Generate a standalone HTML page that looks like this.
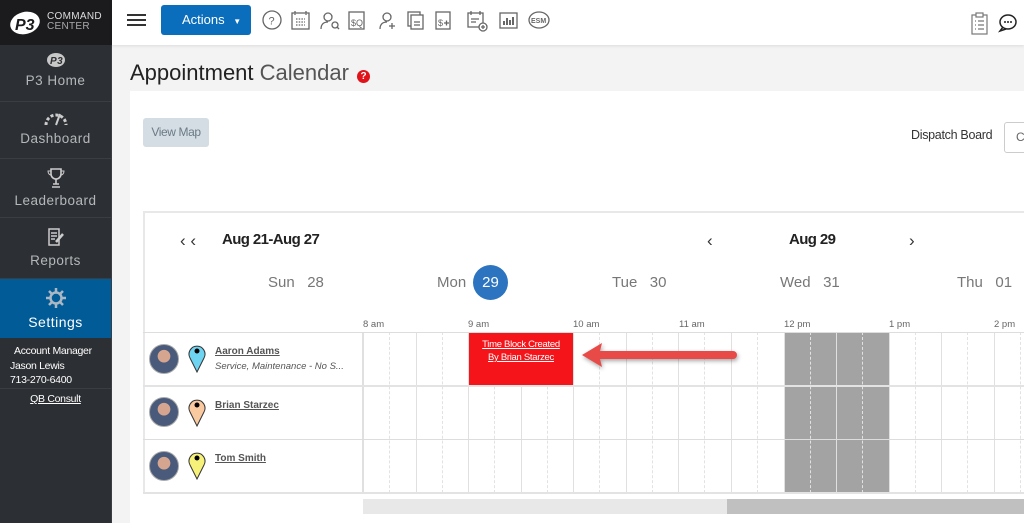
<!DOCTYPE html>
<html><head><meta charset="utf-8"><style>
*{margin:0;padding:0;box-sizing:border-box}
body{width:1024px;height:523px;overflow:hidden;position:relative;background:#f3f3f3;font-family:"Liberation Sans",sans-serif}
.a{position:absolute}
.sb{left:0;top:0;width:112px;height:523px;background:#2c2f33;border-right:1px solid #3a3d41}
.logo{left:0;top:0;width:112px;height:45px;background:#1b1b1d}
.nav{left:0;width:111px;color:#b5b7ba;font-size:13.5px;text-align:center;border-bottom:1px solid #3a3d42;letter-spacing:.5px}
.top{left:112px;top:0;width:912px;height:45px;background:#fff;box-shadow:0 1px 3px rgba(0,0,0,.1)}
.ic{stroke:#666;fill:none;stroke-width:1.3}
.vl{top:332px;height:161px;width:0;border-left:1px solid #e0e0e0}
.vd{top:332px;height:161px;width:0;border-left:1px dashed #e2e2e2}
.name{font-size:10px;color:#555;text-decoration:underline;font-weight:bold}
.hr{font-size:9.5px;color:#666;top:319px}
.day{font-size:15px;color:#777;top:274px}
</style></head><body>
<div class="a sb"></div>
<div class="a logo">
<svg class="a" style="left:8px;top:9px" width="36" height="28" viewBox="0 0 36 28"><ellipse cx="17" cy="14" rx="15" ry="11" fill="#fff" transform="rotate(-15 17 14)"/><text x="7" y="21" font-size="16" font-weight="bold" font-style="italic" fill="#1b1b1d" font-family="Liberation Sans">P3</text></svg>
<div class="a" style="left:47px;top:12px;color:#ddd;font-size:10px;line-height:10px;letter-spacing:.3px">COMMAND<br><span style="color:#aaa">CENTER</span></div>
</div>
<div class="a nav" style="top:45px;height:57px"><svg style="margin-top:7px" width="20" height="16" viewBox="0 0 20 16"><ellipse cx="10" cy="8" rx="9" ry="7" fill="#c8c8c8"/><text x="4" y="12" font-size="10" font-weight="bold" font-style="italic" fill="#2c2f33">P3</text></svg><div style="margin-top:2px">P3 Home</div></div>
<div class="a nav" style="top:102px;height:57px"><svg style="margin-top:8px" width="26" height="16" viewBox="0 0 26 16"><path d="M3 15 A10 10 0 0 1 23 15" stroke="#ccc" stroke-width="3" fill="none" stroke-dasharray="3 2"/><path d="M13 15 L17 4" stroke="#ccc" stroke-width="2"/></svg><div style="margin-top:2px">Dashboard</div></div>
<div class="a nav" style="top:159px;height:59px"><svg style="margin-top:8px" width="18" height="22" viewBox="0 0 18 22"><path d="M4 2h10v5a5 5 0 0 1-10 0z M9 12v5 M5 20h8 M6 17h6" stroke="#ccc" stroke-width="1.6" fill="none"/><path d="M4 4H1c0 3 2 4 3 4 M14 4h3c0 3-2 4-3 4" stroke="#ccc" fill="none"/></svg><div style="margin-top:1px">Leaderboard</div></div>
<div class="a nav" style="top:218px;height:61px"><svg style="margin-top:9px" width="20" height="20" viewBox="0 0 20 20"><path d="M3 2h10v16H3z M5 6h6 M5 9h6 M5 12h4" stroke="#ccc" stroke-width="1.5" fill="none"/><path d="M10 15l7-8" stroke="#ccc" stroke-width="2.5"/></svg><div style="margin-top:3px">Reports</div></div>
<div class="a nav" style="top:279px;height:59px;background:#005b96;color:#fff;font-size:14px;border:none"><svg style="margin-top:8px" width="22" height="22" viewBox="0 0 22 22"><circle cx="11" cy="11" r="5.5" stroke="#aab7c4" stroke-width="2.5" fill="none"/><path d="M11 1v4M11 17v4M1 11h4M17 11h4M4 4l3 3M15 15l3 3M4 18l3-3M15 7l3-3" stroke="#aab7c4" stroke-width="2.5"/></svg><div style="margin-top:2px">Settings</div></div>
<div class="a" style="left:0;top:344px;width:111px;color:#fff;font-size:10.5px;line-height:14.5px;letter-spacing:-.3px"><div style="padding-left:14px">Account Manager</div><div style="padding-left:10px">Jason Lewis</div><div style="padding-left:10px">713-270-6400</div></div>
<div class="a" style="left:0;top:388px;width:111px;border-top:1px solid #3a3d42;text-align:center;color:#fff;font-size:10.5px;text-decoration:underline;padding-top:4px;letter-spacing:-.3px">QB Consult</div>

<div class="a top"></div>
<div class="a" style="left:127px;top:14px;width:19px;height:2px;background:#333;box-shadow:0 5px 0 #333,0 10px 0 #333"></div>
<div class="a" style="left:161px;top:5px;width:90px;height:30px;background:#0a6ebd;border-radius:3px;color:#fff;font-size:13px;line-height:30px;padding-left:21px">Actions <span style="font-size:8px;margin-left:5px">&#9660;</span></div>
<svg class="a" style="left:260px;top:8px" width="300" height="26" viewBox="0 0 300 26">
<g class="ic">
<circle cx="12" cy="12" r="9"/><text x="8.5" y="16.5" font-size="11" fill="#666" stroke="none">?</text>
<rect x="32" y="5" width="17" height="16"/><path d="M35 3v4M46 3v4M36 11h9M36 14h9M36 17h9" stroke-dasharray="1.5 1.2"/>
<circle cx="68" cy="9" r="4"/><path d="M61 21c0-5 3-7 7-7"/><circle cx="75" cy="17" r="3"/><path d="M77 19l2 2"/>
<rect x="89" y="4" width="15" height="17"/><text x="91" y="18" font-size="9" fill="#666" stroke="none">$Q</text>
<circle cx="127" cy="9" r="4"/><path d="M120 21c0-5 3-7 7-7 M132 15v6 M129 18h6"/>
<rect x="148" y="4" width="12" height="14"/><rect x="151" y="7" width="12" height="14" fill="#fff"/><path d="M154 14h6M154 17h6"/>
<rect x="176" y="4" width="14" height="17"/><text x="178" y="18" font-size="9" fill="#666" stroke="none">$</text><path d="M184 15h5M186.5 12.5v5"/>
<rect x="208" y="5" width="15" height="14"/><path d="M211 3v4M220 3v4M211 11h8M211 14h5"/><circle cx="223" cy="19" r="4" fill="#fff"/><path d="M221 19h4M223 17v4"/>
<rect x="240" y="5" width="17" height="15"/><path d="M244 17v-4M247 17v-7M250 17v-5M253 17v-8" stroke-width="2"/>
<ellipse cx="279" cy="12" rx="10" ry="8"/><text x="271" y="15" font-size="7" font-weight="bold" fill="#666" stroke="none">ESM</text>
</g></svg>
<svg class="a" style="left:968px;top:11px" width="60" height="25" viewBox="0 0 60 25"><g stroke="#777" fill="none" stroke-width="1.2"><rect x="4" y="4" width="15" height="19"/><rect x="8" y="2" width="7" height="4" fill="#fff"/><path d="M7 10h1M10 10h6M7 14h1M10 14h6M7 18h1M10 18h6"/></g><g stroke="#222" fill="none" stroke-width="1.5"><ellipse cx="40" cy="11" rx="8" ry="7"/><path d="M35 16l-3 4 6-2"/></g><circle cx="37" cy="11" r="1" fill="#222"/><circle cx="40" cy="11" r="1" fill="#222"/><circle cx="43" cy="11" r="1" fill="#222"/></svg>

<div class="a" style="left:130px;top:60px;font-size:22px;color:#222">Appointment <span style="color:#555">Calendar</span></div>
<div class="a" style="left:357px;top:70px;width:13px;height:13px;border-radius:50%;background:#e0131b;color:#fff;font-size:10px;font-weight:bold;text-align:center;line-height:13px">?</div>

<div class="a" style="left:130px;top:91px;width:894px;height:432px;background:#fff"></div>
<div class="a" style="left:143px;top:118px;width:66px;height:29px;background:#d3dde3;border-radius:3px;color:#6b7a85;font-size:12px;line-height:29px;text-align:center;letter-spacing:-.4px">View Map</div>
<div class="a" style="left:911px;top:128px;font-size:12.5px;color:#333;letter-spacing:-.3px">Dispatch Board</div>
<div class="a" style="left:1004px;top:122px;width:40px;height:31px;border:1px solid #ccc;border-radius:3px;color:#666;font-size:12px;line-height:29px;padding-left:11px">C</div>

<div class="a" style="left:143px;top:211px;width:900px;height:283px;border:2px solid #e8e8e8;border-right:none"></div>
<div class="a" style="left:180px;top:231px;font-size:17px;color:#333">&lsaquo; &lsaquo;</div>
<div class="a" style="left:222px;top:231px;font-size:15px;color:#222;font-weight:bold;letter-spacing:-.6px">Aug 21-Aug 27</div>
<div class="a" style="left:707px;top:231px;font-size:17px;color:#333">&lsaquo;</div>
<div class="a" style="left:789px;top:231px;font-size:15px;color:#222;font-weight:bold;letter-spacing:-.6px">Aug 29</div>
<div class="a" style="left:909px;top:231px;font-size:17px;color:#333">&rsaquo;</div>
<div class="a day" style="left:268px">Sun&nbsp;&nbsp; 28</div>
<div class="a day" style="left:437px">Mon</div>
<div class="a" style="left:473px;top:265px;width:35px;height:35px;border-radius:50%;background:#2c74bf;color:#fff;font-size:15px;text-align:center;line-height:35px">29</div>
<div class="a day" style="left:612px">Tue&nbsp;&nbsp; 30</div>
<div class="a day" style="left:780px">Wed&nbsp;&nbsp; 31</div>
<div class="a day" style="left:957px">Thu&nbsp;&nbsp; 01</div>

<div class="a hr" style="left:363px">8 am</div>
<div class="a hr" style="left:468px">9 am</div>
<div class="a hr" style="left:573px">10 am</div>
<div class="a hr" style="left:679px">11 am</div>
<div class="a hr" style="left:784px">12 pm</div>
<div class="a hr" style="left:889px">1 pm</div>
<div class="a hr" style="left:994px">2 pm</div>

<div class="a" style="left:784px;top:332px;width:105px;height:161px;background:#a3a3a3"></div>

<div class="a vl" style="left:362px;border-left:2px solid #e0e0e0"></div><div class="a vd" style="left:389px"></div><div class="a vl" style="left:416px"></div><div class="a vd" style="left:442px"></div><div class="a vl" style="left:468px"></div><div class="a vd" style="left:494px"></div><div class="a vl" style="left:521px"></div><div class="a vd" style="left:547px"></div><div class="a vl" style="left:573px"></div><div class="a vd" style="left:599px"></div><div class="a vl" style="left:626px"></div><div class="a vd" style="left:652px"></div><div class="a vl" style="left:678px"></div><div class="a vd" style="left:704px"></div><div class="a vl" style="left:731px"></div><div class="a vd" style="left:757px"></div><div class="a vl" style="left:784px"></div><div class="a vd" style="left:810px"></div><div class="a vl" style="left:836px"></div><div class="a vd" style="left:862px"></div><div class="a vl" style="left:889px"></div><div class="a vd" style="left:915px"></div><div class="a vl" style="left:941px"></div><div class="a vd" style="left:967px"></div><div class="a vl" style="left:994px"></div><div class="a vd" style="left:1020px"></div>
<div class="a" style="left:143px;top:332px;width:881px;height:1px;background:#ddd"></div>
<div class="a" style="left:143px;top:385px;width:881px;height:2px;background:#e3e3e3"></div>
<div class="a" style="left:143px;top:439px;width:881px;height:1px;background:#ddd"></div>
<div class="a" style="left:143px;top:492px;width:881px;height:2px;background:#e3e3e3"></div>

<div class="a" style="left:469px;top:333px;width:104px;height:52px;background:#f5141a;color:#fff;font-size:9.5px;text-align:center;text-decoration:underline;line-height:13px;padding-top:5px;letter-spacing:-.3px">Time Block Created<br>By Brian Starzec</div>
<svg class="a" style="left:578px;top:338px" width="165" height="34" viewBox="0 0 165 34"><path d="M4 17 L24 5 L22 13 L155 13 A4 4 0 0 1 155 21 L22 21 L24 29 Z" fill="#e84a48" style="filter:drop-shadow(1px 2px 2px rgba(0,0,0,.35))"/></svg>

<div class="a" style="left:149px;top:344px;width:30px;height:30px;border-radius:50%;background:radial-gradient(circle at 50% 40%,#d6a58f 0 28%,#4a5a7a 30% 100%);border:1px solid #aaa"></div>
<div class="a" style="left:149px;top:397px;width:30px;height:30px;border-radius:50%;background:radial-gradient(circle at 50% 40%,#d6a58f 0 28%,#4a5a7a 30% 100%);border:1px solid #aaa"></div>
<div class="a" style="left:149px;top:451px;width:30px;height:30px;border-radius:50%;background:radial-gradient(circle at 50% 40%,#d6a58f 0 28%,#4a5a7a 30% 100%);border:1px solid #aaa"></div>
<svg class="a" style="left:187px;top:342px" width="20" height="32" viewBox="0 0 20 32"><path d="M10 30 L3 16 A8 8 0 1 1 17 16 Z" fill="#6fd3f2" stroke="#333"/><circle cx="10" cy="9" r="2.5" fill="#000"/></svg>
<svg class="a" style="left:187px;top:396px" width="20" height="32" viewBox="0 0 20 32"><path d="M10 30 L3 16 A8 8 0 1 1 17 16 Z" fill="#f9c9a0" stroke="#333"/><circle cx="10" cy="9" r="2.5" fill="#000"/></svg>
<svg class="a" style="left:187px;top:449px" width="20" height="32" viewBox="0 0 20 32"><path d="M10 30 L3 16 A8 8 0 1 1 17 16 Z" fill="#f6f279" stroke="#333"/><circle cx="10" cy="9" r="2.5" fill="#000"/></svg>
<div class="a name" style="left:215px;top:346px">Aaron Adams</div>
<div class="a" style="left:215px;top:361px;font-size:9.5px;color:#555;font-style:italic">Service, Maintenance - No S...</div>
<div class="a name" style="left:215px;top:400px">Brian Starzec</div>
<div class="a name" style="left:215px;top:453px">Tom Smith</div>

<div class="a" style="left:363px;top:499px;width:364px;height:15px;background:#e8e8e8"></div>
<div class="a" style="left:727px;top:499px;width:297px;height:15px;background:#c0c0c0"></div>
</body></html>
